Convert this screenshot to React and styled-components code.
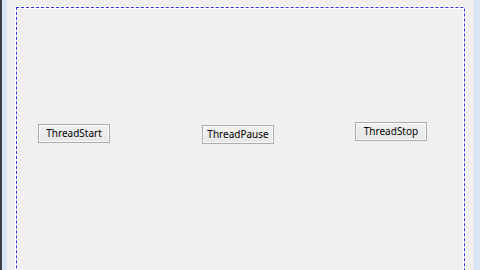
import React from 'react'
import styled, { createGlobalStyle } from 'styled-components'

const GlobalStyle = createGlobalStyle`
  html, body {
    margin: 0;
    padding: 0;
    width: 480px;
    height: 270px;
    overflow: hidden;
    background: #f0f0f0;
    font-family: "Noto Sans", "Open Sans", sans-serif;
  }
`

const Workspace = styled.div`
  display: flex;
  width: 480px;
  height: 270px;
  background: #f0f0f0;
`

const DarkEdge = styled.div`
  width: 2px;
  background: #3b4046;
`

const SideBand = styled.div`
  width: ${p => p.w}px;
  background: #d9e6f4;
`

const Surface = styled.div`
  flex: 1;
  padding: 7px 9px 0 9px;
  overflow: hidden;
`

const DesignCanvas = styled.div`
  position: relative;
  height: 300px;
  border: 1px dashed #3030e0;
  border-bottom: none;
  border-top-right-radius: 2px;
  box-shadow: 0 0 0 1px #ffffff, inset 0 0 0 1px #ffffff;
`

const FormButton = styled.button`
  position: absolute;
  left: ${p => p.x}px;
  top: ${p => p.y}px;
  width: 72px;
  height: 19px;
  padding: 0;
  border: 1px solid #adadad;
  background: linear-gradient(#f2f2f2, #e6e6e6);
  box-shadow: inset 0 0 0 1px #f8f8f8;
  font-family: "Noto Sans", "Open Sans", sans-serif;
  font-size: 10px;
  color: #000;
  line-height: 17px;
`

const buttons = [
  { label: 'ThreadStart', x: 21, y: 116 },
  { label: 'ThreadPause', x: 185, y: 117 },
  { label: 'ThreadStop', x: 338, y: 114 },
]

export default function App() {
  return (
    <>
      <GlobalStyle />
      <Workspace>
        <DarkEdge />
        <SideBand w={5} />
        <Surface>
          <DesignCanvas>
            {buttons.map(b => (
              <FormButton key={b.label} x={b.x} y={b.y}>
                {b.label}
              </FormButton>
            ))}
          </DesignCanvas>
        </Surface>
        <SideBand w={6} />
      </Workspace>
    </>
  )
}
